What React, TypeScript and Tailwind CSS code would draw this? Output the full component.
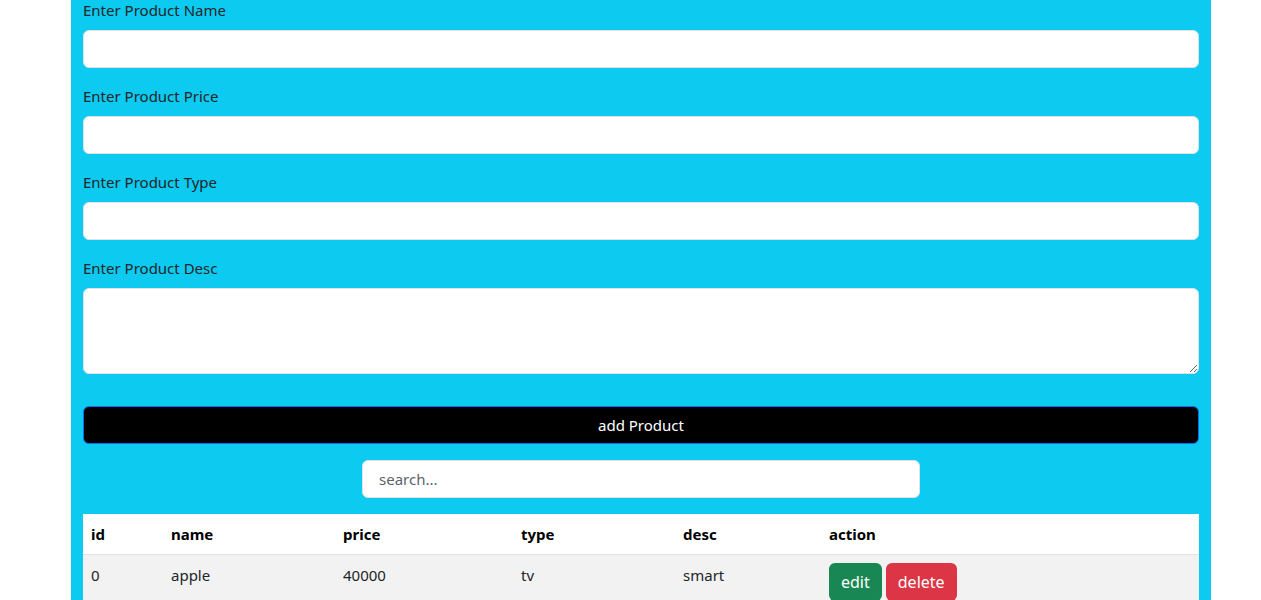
import { useState } from 'react';

interface Product {
  id: number;
  name: string;
  price: string;
  type: string;
  desc: string;
}

const fields = [
  { key: 'name', label: 'Enter Product Name' },
  { key: 'price', label: 'Enter Product Price' },
  { key: 'type', label: 'Enter Product Type' },
];

export default function App() {
  const [products] = useState<Product[]>([
    { id: 0, name: 'apple', price: '40000', type: 'tv', desc: 'smart' },
  ]);
  const [search, setSearch] = useState('');

  return (
    <div className="min-h-screen bg-white text-[#212529] font-['Noto_Sans','Open_Sans',sans-serif] text-[15px] leading-6">
      <div className="ml-[71px] w-[1140px] bg-[#0dcaf0] px-3 -mt-[2px] pb-4">
        {fields.map((f) => (
          <div key={f.key} className="mb-4">
            <label className="block mb-2">{f.label}</label>
            <input
              type="text"
              className="block w-full h-[38px] px-3 bg-white border border-[#dee2e6] rounded-md focus:outline-none"
            />
          </div>
        ))}
        <div className="mb-4">
          <label className="block mb-2">Enter Product Desc</label>
          <textarea
            rows={3}
            className="block w-full h-[86px] px-3 py-1.5 bg-white border border-[#dee2e6] rounded-md focus:outline-none"
          />
        </div>

        <button className="mt-8 block w-full h-[38px] bg-black text-white border border-[#0d6efd] rounded-md">
          add Product
        </button>

        <div className="flex justify-center mt-4">
          <input
            type="text"
            value={search}
            onChange={(e) => setSearch(e.target.value)}
            placeholder="search..."
            className="w-1/2 h-[38px] px-4 bg-white border border-[#dee2e6] rounded-md placeholder:text-[#5c636a] focus:outline-none"
          />
        </div>

        <table className="mt-4 w-full border-collapse text-left">
          <thead className="bg-white text-black">
            <tr className="border-b border-[#dee2e6]">
              <th className="w-[80px] p-2 font-bold">id</th>
              <th className="w-[172px] p-2 font-bold">name</th>
              <th className="w-[178px] p-2 font-bold">price</th>
              <th className="w-[162px] p-2 font-bold">type</th>
              <th className="w-[146px] p-2 font-bold">desc</th>
              <th className="p-2 font-bold">action</th>
            </tr>
          </thead>
          <tbody>
            {products.map((p) => (
              <tr key={p.id} className="bg-[#f2f2f2] align-top">
                <td className="p-2">{p.id}</td>
                <td className="p-2">{p.name}</td>
                <td className="p-2">{p.price}</td>
                <td className="p-2">{p.type}</td>
                <td className="p-2">{p.desc}</td>
                <td className="p-2">
                  <div className="flex gap-1">
                    <button className="h-[38px] px-3 text-base bg-[#198754] text-white rounded-md">edit</button>
                    <button className="h-[38px] px-3 text-base bg-[#dc3545] text-white rounded-md">delete</button>
                  </div>
                </td>
              </tr>
            ))}
          </tbody>
        </table>
      </div>
    </div>
  );
}
